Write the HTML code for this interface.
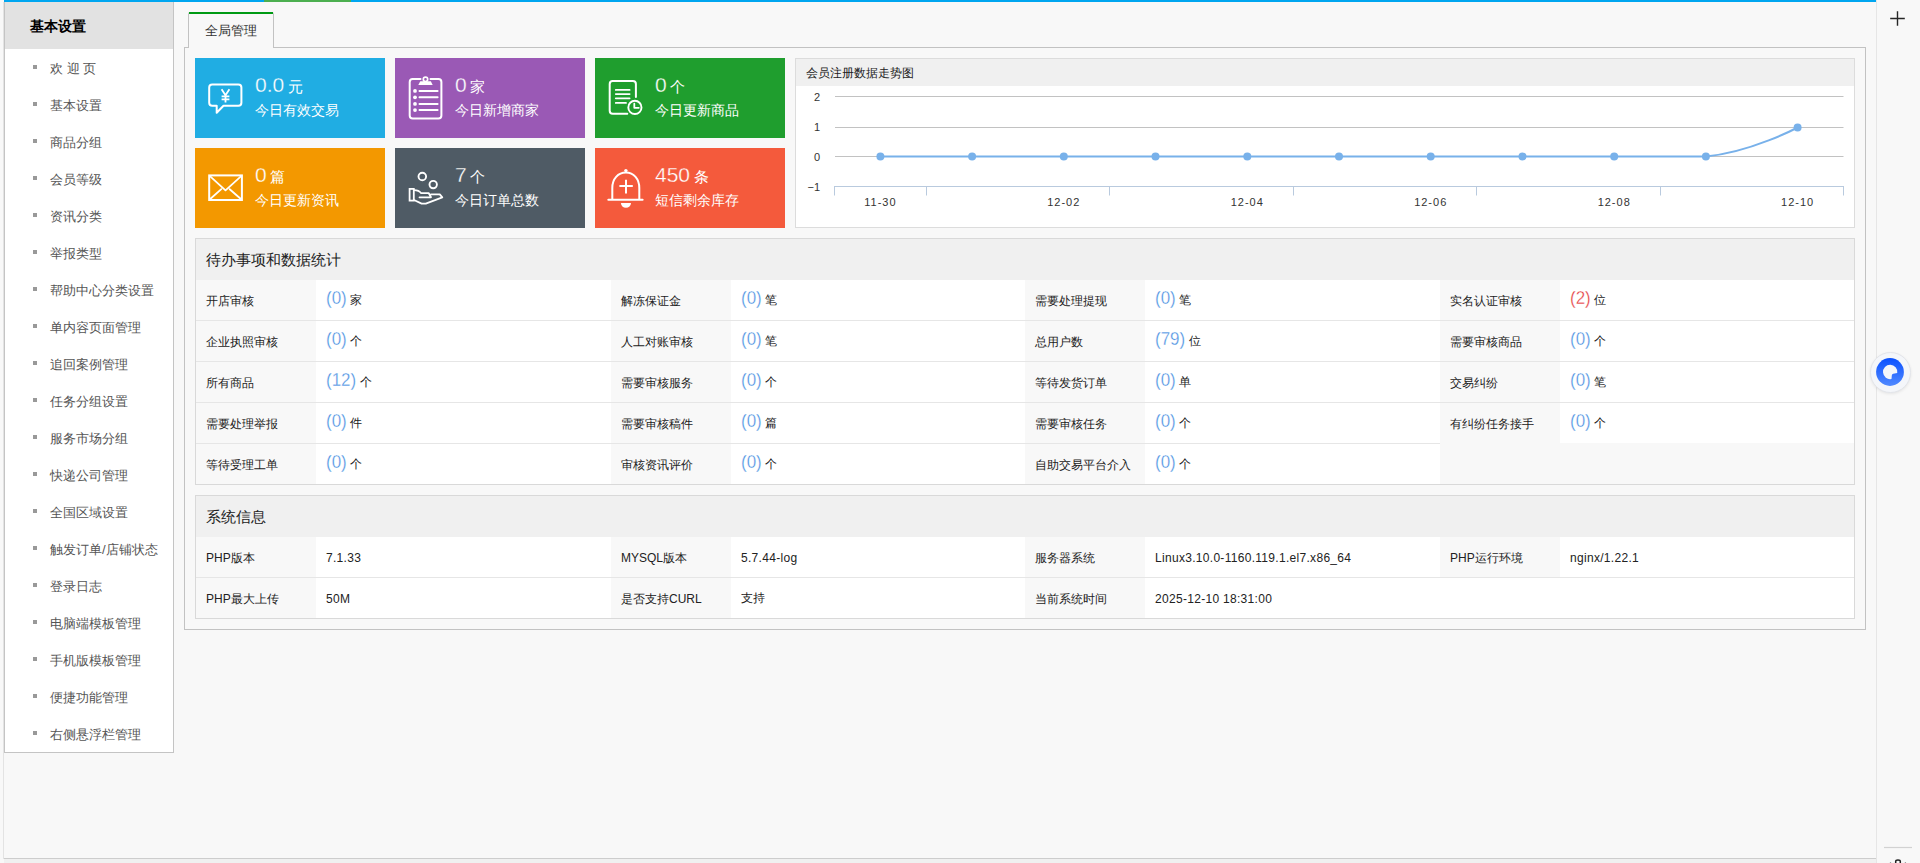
<!DOCTYPE html>
<html><head><meta charset="utf-8">
<style>
*{margin:0;padding:0;box-sizing:border-box}
html,body{width:1920px;height:863px;overflow:hidden;background:#f8f8f8;font-family:"Liberation Sans",sans-serif;color:#333}
.abs{position:absolute}
#topbar{left:4px;top:0;width:1872px;height:2px;background:#00a6f0}
#topgreen{left:264px;top:0;width:87px;height:2px;background:#4caf50}
#frameL{left:3px;top:2px;width:1px;height:857px;background:#e3e3e3}
#frameB{left:4px;top:858px;width:1872px;height:1px;background:#cdcdcd}
#frameBB{left:4px;top:859px;width:1872px;height:4px;background:#f0f0f0}
#divR{left:1876px;top:0;width:1px;height:863px;background:#e6e6e6}
#side{left:4px;top:2px;width:170px;height:751px;border:1px solid #c4c4c4;border-top:0;background:#fff}
#sidehd{left:5px;top:2px;width:168px;height:47px;background:#e2e2e2;font-size:14px;font-weight:bold;color:#000;line-height:48px;padding-left:25px}
.si{position:absolute;left:50px;font-size:13px;color:#555;height:20px;line-height:24px;white-space:nowrap}
.sb{position:absolute;left:33px;width:4px;height:4px;background:#999}
#tab{left:188px;top:12px;width:86px;height:36px;border:1px solid #c2c2c2;border-top:2px solid #f8f8f8;border-bottom:0;background:#f8f8f8;font-size:13px;line-height:33px;text-align:center;color:#333;z-index:2}
#tabg{left:189px;top:12px;width:84px;height:2px;background:#009a14;z-index:3}
#cont{left:184px;top:47px;width:1682px;height:583px;border:1px solid #c2c2c2;background:#f8f8f8}
.tile{position:absolute;width:190px;height:80px;color:#fff}
.tile .num{position:absolute;left:60px;top:15px;font-size:21px;line-height:24px;white-space:nowrap}
.tile .num small{font-size:15px;margin-left:3.5px;-webkit-text-stroke:0}
.tile .lab{position:absolute;left:60px;top:43px;font-size:14px;line-height:18px;white-space:nowrap}
.tile svg{position:absolute;left:12px;top:22px}
#chart{left:795px;top:58px;width:1060px;height:170px;border:1px solid #dcdcdc;background:#fff}
#charthd{left:796px;top:59px;width:1058px;height:27px;background:#f0f0f0;font-size:12px;line-height:29px;padding-left:10px;color:#222}
.panel{position:absolute;left:195px;width:1660px;border:1px solid #d9d9d9;background:#f8f8f8}
.phd{height:41px;background:#f0f0f0;font-size:15px;line-height:41px;padding-left:10px;color:#222;border-bottom:1px solid #f0f0f0}
table{border-collapse:collapse;width:100%;table-layout:fixed}
td{height:41px;border-top:1px solid #e6e6e6;font-size:12px;padding-left:10px;padding-top:2px;white-space:nowrap;color:#222}
td.l{background:#f8f8f8;width:120px;padding-top:4px}
td.v{background:#fff;padding-top:0;padding-bottom:2px}
td.sv{padding-top:2px;padding-bottom:0}
tr:first-child td{height:40px;border-top:0}
.sv{letter-spacing:.3px}
.bn{color:#4a90e2;-webkit-text-stroke:0.3px #fff;font-size:17px;position:relative;top:-1px;display:inline-block;transform:scaleY(1.1)}
.rn{color:#e4393c;-webkit-text-stroke:0.3px #fff;font-size:17px;position:relative;top:-1px;display:inline-block;transform:scaleY(1.1)}
</style></head><body>
<div id="topbar" class="abs"></div>
<div id="topgreen" class="abs"></div>
<div id="frameL" class="abs"></div>
<div id="frameB" class="abs"></div>
<div id="frameBB" class="abs"></div>
<div id="divR" class="abs"></div>
<svg class="abs" style="left:1877px;top:0;z-index:5" width="43" height="863" viewBox="1877 0 43 863">
<path d="M1897.5 11.3V25.8M1890.2 18.5H1904.8" stroke="#262626" stroke-width="1.4"/>
<path d="M1884 847.5H1912" stroke="#d2d2d2" stroke-width="1.2"/>
<path d="M1895.7 863V861.2Q1895.7 859.9 1898 859.9Q1900.3 859.9 1900.3 861.2V863" fill="none" stroke="#222" stroke-width="1.5"/>
<circle cx="1890.5" cy="862.6" r="0.7" fill="#999"/><circle cx="1905.4" cy="862.6" r="0.7" fill="#999"/>
</svg>
<div class="abs" style="left:1869.5px;top:351.5px;width:41px;height:41px;border-radius:50%;background:#f4f6fa;border:1px solid #e3e5ea;box-shadow:0 1px 3px rgba(0,0,0,0.08);z-index:6"></div>
<svg class="abs" style="left:1870px;top:352px;z-index:7" width="40" height="40" viewBox="1870 352 40 40">
<defs><linearGradient id="bg1" x1="0" y1="0" x2="0" y2="1"><stop offset="0" stop-color="#0a50ff"/><stop offset="1" stop-color="#5089ff"/></linearGradient></defs>
<circle cx="1890" cy="372" r="13.9" fill="url(#bg1)"/>
<path d="M1891.5 379A7.15 7.15 0 1 1 1897.25 372.9L1893.3 373.8Q1892 374.2 1891.8 375.4Z" fill="#f4f6fa"/>
</svg>

<!-- sidebar -->
<div id="side" class="abs"></div>
<div id="sidehd" class="abs">基本设置</div>
<div id="sideitems" class="abs" style="left:0;top:0">
<div class="sb" style="top:65px"></div><div class="si" style="top:57px">欢 迎 页</div>
<div class="sb" style="top:102px"></div><div class="si" style="top:94px">基本设置</div>
<div class="sb" style="top:139px"></div><div class="si" style="top:131px">商品分组</div>
<div class="sb" style="top:176px"></div><div class="si" style="top:168px">会员等级</div>
<div class="sb" style="top:213px"></div><div class="si" style="top:205px">资讯分类</div>
<div class="sb" style="top:250px"></div><div class="si" style="top:242px">举报类型</div>
<div class="sb" style="top:287px"></div><div class="si" style="top:279px">帮助中心分类设置</div>
<div class="sb" style="top:324px"></div><div class="si" style="top:316px">单内容页面管理</div>
<div class="sb" style="top:361px"></div><div class="si" style="top:353px">追回案例管理</div>
<div class="sb" style="top:398px"></div><div class="si" style="top:390px">任务分组设置</div>
<div class="sb" style="top:435px"></div><div class="si" style="top:427px">服务市场分组</div>
<div class="sb" style="top:472px"></div><div class="si" style="top:464px">快递公司管理</div>
<div class="sb" style="top:509px"></div><div class="si" style="top:501px">全国区域设置</div>
<div class="sb" style="top:546px"></div><div class="si" style="top:538px">触发订单/店铺状态</div>
<div class="sb" style="top:583px"></div><div class="si" style="top:575px">登录日志</div>
<div class="sb" style="top:620px"></div><div class="si" style="top:612px">电脑端模板管理</div>
<div class="sb" style="top:657px"></div><div class="si" style="top:649px">手机版模板管理</div>
<div class="sb" style="top:694px"></div><div class="si" style="top:686px">便捷功能管理</div>
<div class="sb" style="top:731px"></div><div class="si" style="top:723px">右侧悬浮栏管理</div>
</div>

<div id="cont" class="abs"></div>
<div id="tab" class="abs">全局管理</div><div id="tabg" class="abs"></div>

<!-- tiles -->
<svg class="abs" style="left:195px;top:58px;z-index:3" width="590" height="170" viewBox="195 58 590 170" fill="none" stroke="#fff" stroke-linecap="round" stroke-linejoin="round">
<!-- bubble -->
<path d="M212.2 84.6H238.4Q241.4 84.6 241.4 87.6V102.8Q241.4 105.8 238.4 105.8H223.5L216.7 112.8V105.8H212.2Q209.2 105.8 209.2 102.8V87.6Q209.2 84.6 212.2 84.6Z" stroke-width="2"/>
<path d="M221.6 89.2L225.5 95.3L229.4 89.2M225.5 95.3V102.4M221.6 96.3H229.4M221.6 99.4H229.4" stroke-width="1.8" stroke-linecap="butt"/>
<!-- clipboard -->
<path d="M420.5 79H412.7Q409.7 79 409.7 82V115.5Q409.7 118.5 412.7 118.5H438.4Q441.4 118.5 441.4 115.5V82Q441.4 79 438.4 79H430.5" stroke-width="2"/>
<circle cx="425.5" cy="79.3" r="2.2" stroke-width="1.7"/>
<path d="M420.3 81.3H430.8L432.7 84.9H418.3Z" fill="#fff" stroke="none"/>
<g fill="#fff" stroke="none"><circle cx="415" cy="90.9" r="1.9"/><circle cx="415" cy="97.3" r="1.9"/><circle cx="415" cy="103.9" r="1.9"/><circle cx="415" cy="110.1" r="1.9"/></g>
<path d="M419.5 90.9H437.6M419.5 97.3H437.6M419.5 103.9H437.6M419.5 110.1H437.6" stroke-width="2"/>
<!-- doc clock -->
<path d="M627.3 113.7H612.7Q609.7 113.7 609.7 110.7V84Q609.7 81 612.7 81H632.9Q635.9 81 635.9 84V97" stroke-width="2"/>
<path d="M615.8 89.9H629.6M615.8 94.1H629.6M615.8 98.3H629.6M615.8 102.9H626" stroke-width="1.8"/>
<circle cx="634.9" cy="107.4" r="6.6" stroke-width="1.9"/>
<path d="M634.3 103.6V107.8H638.8" stroke-width="1.8"/>
<!-- envelope -->
<rect x="209.2" y="175.4" width="32.7" height="24.6" stroke-width="2" stroke-linejoin="miter"/>
<path d="M210.2 176.4L225.5 190.3L240.9 176.4M210.2 199L221.3 189.2M240.9 199L229.7 189.2" stroke-width="1.8"/>
<!-- hand coins -->
<circle cx="422.3" cy="176.5" r="3.8" stroke-width="1.9"/>
<circle cx="433.2" cy="184.6" r="3.7" stroke-width="1.9"/>
<rect x="409.6" y="188.9" width="4.2" height="11.7" stroke-width="1.8" stroke-linejoin="miter"/>
<path d="M414 190.2C417 190.2 419.5 191 421.2 193.2H428.8L431 197.3H419.5M431 194.4H439.8L442.3 197.4L425.8 203.6H421.6L414 200" stroke-width="1.8"/>
<!-- bell -->
<path d="M612.3 199V188C612.3 179 618 172.6 625.9 172.6C633.8 172.6 639.3 179 639.3 188V199" stroke-width="2"/>
<path d="M608.3 199.7H642.6" stroke-width="2"/>
<circle cx="625.9" cy="170.6" r="1.7" fill="#fff" stroke="none"/>
<path d="M620.9 203.1H631A5 4.7 0 0 1 620.9 203.1Z" fill="#fff" stroke="none"/>
<path d="M619.4 186.1H632.8M626 179.8V193.4" stroke-width="2" stroke-linecap="butt"/>
</svg>

<div class="tile" style="left:195px;top:58px;background:#20ade3"><div class="num" style="-webkit-text-stroke:0.3px #20ade3">0.0<small>元</small></div><div class="lab">今日有效交易</div></div>
<div class="tile" style="left:395px;top:58px;background:#9a59b5"><div class="num" style="-webkit-text-stroke:0.3px #9a59b5">0<small>家</small></div><div class="lab">今日新增商家</div></div>
<div class="tile" style="left:595px;top:58px;background:#1f9e2e"><div class="num" style="-webkit-text-stroke:0.3px #1f9e2e">0<small>个</small></div><div class="lab">今日更新商品</div></div>
<div class="tile" style="left:195px;top:148px;background:#f39800"><div class="num" style="-webkit-text-stroke:0.3px #f39800">0<small>篇</small></div><div class="lab">今日更新资讯</div></div>
<div class="tile" style="left:395px;top:148px;background:#4f5b65"><div class="num" style="-webkit-text-stroke:0.3px #4f5b65">7<small>个</small></div><div class="lab">今日订单总数</div></div>
<div class="tile" style="left:595px;top:148px;background:#f45a3c"><div class="num" style="-webkit-text-stroke:0.3px #f45a3c">450<small>条</small></div><div class="lab">短信剩余库存</div></div>

<!-- chart -->
<svg class="abs" style="left:796px;top:87px;z-index:3" width="1058" height="140" viewBox="796 87 1058 140">
<path d="M835 96.5H1843.5" stroke="#c2c2c2" stroke-width="1"/>
<path d="M835 127.5H1843.5" stroke="#c2c2c2" stroke-width="1"/>
<path d="M835 156.5H1843.5" stroke="#c2c2c2" stroke-width="1"/>
<path d="M834 186.5H1844" stroke="#b9cade" stroke-width="1"/>
<path d="M834.5 186.5V195.5" stroke="#b9cade" stroke-width="1"/>
<path d="M926.5 186.5V195.5" stroke="#b9cade" stroke-width="1"/>
<path d="M1109.5 186.5V195.5" stroke="#b9cade" stroke-width="1"/>
<path d="M1293.5 186.5V195.5" stroke="#b9cade" stroke-width="1"/>
<path d="M1476.5 186.5V195.5" stroke="#b9cade" stroke-width="1"/>
<path d="M1660.5 186.5V195.5" stroke="#b9cade" stroke-width="1"/>
<path d="M1843.5 186.5V195.5" stroke="#b9cade" stroke-width="1"/>
<path d="M880.4 156.5H1705.9C1751 152.3 1797.6 127.5 1797.6 127.5" fill="none" stroke="#78b1ea" stroke-width="2"/>
<circle cx="880.4" cy="156.5" r="4" fill="#78b1ea"/>
<circle cx="972.1" cy="156.5" r="4" fill="#78b1ea"/>
<circle cx="1063.8" cy="156.5" r="4" fill="#78b1ea"/>
<circle cx="1155.5" cy="156.5" r="4" fill="#78b1ea"/>
<circle cx="1247.3" cy="156.5" r="4" fill="#78b1ea"/>
<circle cx="1339.0" cy="156.5" r="4" fill="#78b1ea"/>
<circle cx="1430.7" cy="156.5" r="4" fill="#78b1ea"/>
<circle cx="1522.5" cy="156.5" r="4" fill="#78b1ea"/>
<circle cx="1614.2" cy="156.5" r="4" fill="#78b1ea"/>
<circle cx="1705.9" cy="156.5" r="4" fill="#78b1ea"/>
<circle cx="1797.6" cy="127.5" r="4" fill="#78b1ea"/>
<g font-family="Liberation Sans, sans-serif" font-size="11" fill="#333" text-anchor="end">
<text x="820" y="100.8">2</text>
<text x="820" y="131.3">1</text>
<text x="820" y="160.8">0</text>
<text x="820" y="190.8">−1</text>
</g><g font-family="Liberation Sans, sans-serif" font-size="11" fill="#333" text-anchor="middle" letter-spacing="1">
<text x="880.4" y="206.3">11-30</text>
<text x="1063.8" y="206.3">12-02</text>
<text x="1247.3" y="206.3">12-04</text>
<text x="1430.7" y="206.3">12-06</text>
<text x="1614.2" y="206.3">12-08</text>
<text x="1797.6" y="206.3">12-10</text>
</g></svg>
<div id="chart" class="abs"></div>
<div id="charthd" class="abs">会员注册数据走势图</div>

<!-- todo panel -->
<div class="panel" style="top:238px;height:247px">
<div class="phd">待办事项和数据统计</div>
<table class="tt"><colgroup><col style="width:120px"><col style="width:295px"><col style="width:120px"><col style="width:294px"><col style="width:120px"><col style="width:295px"><col style="width:120px"><col></colgroup>
<tr><td class="l">开店审核</td><td class="v"><span class="bn">(0)</span> 家</td><td class="l">解冻保证金</td><td class="v"><span class="bn">(0)</span> 笔</td><td class="l">需要处理提现</td><td class="v"><span class="bn">(0)</span> 笔</td><td class="l">实名认证审核</td><td class="v"><span class="rn">(2)</span> 位</td></tr>
<tr><td class="l">企业执照审核</td><td class="v"><span class="bn">(0)</span> 个</td><td class="l">人工对账审核</td><td class="v"><span class="bn">(0)</span> 笔</td><td class="l">总用户数</td><td class="v"><span class="bn">(79)</span> 位</td><td class="l">需要审核商品</td><td class="v"><span class="bn">(0)</span> 个</td></tr>
<tr><td class="l">所有商品</td><td class="v"><span class="bn">(12)</span> 个</td><td class="l">需要审核服务</td><td class="v"><span class="bn">(0)</span> 个</td><td class="l">等待发货订单</td><td class="v"><span class="bn">(0)</span> 单</td><td class="l">交易纠纷</td><td class="v"><span class="bn">(0)</span> 笔</td></tr>
<tr><td class="l">需要处理举报</td><td class="v"><span class="bn">(0)</span> 件</td><td class="l">需要审核稿件</td><td class="v"><span class="bn">(0)</span> 篇</td><td class="l">需要审核任务</td><td class="v"><span class="bn">(0)</span> 个</td><td class="l">有纠纷任务接手</td><td class="v"><span class="bn">(0)</span> 个</td></tr>
<tr><td class="l">等待受理工单</td><td class="v"><span class="bn">(0)</span> 个</td><td class="l">审核资讯评价</td><td class="v"><span class="bn">(0)</span> 个</td><td class="l">自助交易平台介入</td><td class="v"><span class="bn">(0)</span> 个</td></tr>
</table>
</div>

<!-- sys panel -->
<div class="panel" style="top:495px;height:124px">
<div class="phd">系统信息</div>
<table class="tt"><colgroup><col style="width:120px"><col style="width:295px"><col style="width:120px"><col style="width:294px"><col style="width:120px"><col style="width:295px"><col style="width:120px"><col></colgroup>
<tr><td class="l">PHP版本</td><td class="v sv">7.1.33</td><td class="l">MYSQL版本</td><td class="v sv">5.7.44-log</td><td class="l">服务器系统</td><td class="v sv">Linux3.10.0-1160.119.1.el7.x86_64</td><td class="l">PHP运行环境</td><td class="v sv">nginx/1.22.1</td></tr>
<tr><td class="l">PHP最大上传</td><td class="v sv">50M</td><td class="l">是否支持CURL</td><td class="v sv">支持</td><td class="l">当前系统时间</td><td class="v sv">2025-12-10 18:31:00</td><td class="v" colspan="2"></td></tr>
</table>
</div>

</body></html>
